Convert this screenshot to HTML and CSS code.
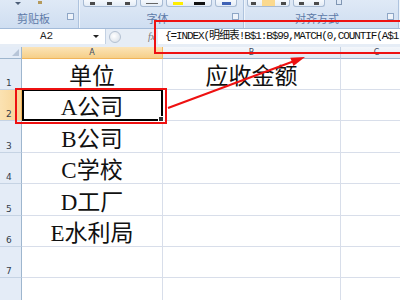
FILE: index.html
```html
<!DOCTYPE html>
<html lang="zh-CN">
<head>
  <meta charset="UTF-8" />
  <title>应收金额</title>
  <link rel="stylesheet" href="styles.css">
</head>
<body>
  <div class="app">
    <div class="ribbon">
      <div class="group g1">
        <div class="tools">
          <span class="drop"></span>
          <span class="brush"></span>
        </div>
        <div class="glabel"><span>剪贴板</span><i class="launch"></i></div>
      </div>
      <div class="group g2">
        <div class="tools">
          <span class="btn w54"><b></b><b></b><b></b></span>
          <span class="btn w23"><b class="line"></b></span>
          <span class="btn w46"><b class="yellow"></b><b class="black"></b></span>
          <span class="btn w22"><b class="blue"></b></span>
        </div>
        <div class="glabel"><span>字体</span><i class="launch"></i></div>
      </div>
      <div class="group g3">
        <div class="tools">
          <span class="btn w43"><b></b><b class="on"></b><b></b></span>
          <span class="btn w32"><b></b><b></b></span>
          <span class="wrap"><b></b></span>
        </div>
        <div class="glabel"><span>对齐方式</span><i class="launch"></i></div>
      </div>
    </div>

    <div class="fbar">
      <div class="namebox"><span class="ref">A2</span><span class="arrow"></span></div>
      <div class="ctrl"><span class="knob"></span></div>
      <div class="fx">fx</div>
      <div class="input">{=INDEX(明细表!B$1:B$99,MATCH(0,COUNTIF(A$1</div>
    </div>

    <div class="sheet">
      <div class="corner"><span></span></div>
      <div class="ch sel">A</div>
      <div class="ch">B</div>
      <div class="ch">C</div>

      <div class="rh">1</div>
      <div class="c">单位</div>
      <div class="c">应收金额</div>
      <div class="c"></div>

      <div class="rh sel">2</div>
      <div class="c active">A公司</div>
      <div class="c"></div>
      <div class="c"></div>

      <div class="rh">3</div>
      <div class="c">B公司</div>
      <div class="c"></div>
      <div class="c"></div>

      <div class="rh">4</div>
      <div class="c">C学校</div>
      <div class="c"></div>
      <div class="c"></div>

      <div class="rh">5</div>
      <div class="c">D工厂</div>
      <div class="c"></div>
      <div class="c"></div>

      <div class="rh">6</div>
      <div class="c">E水利局</div>
      <div class="c"></div>
      <div class="c"></div>

      <div class="rh">7</div>
      <div class="c"></div>
      <div class="c"></div>
      <div class="c"></div>

      <div class="rh"></div>
      <div class="c"></div>
      <div class="c"></div>
      <div class="c"></div>
    </div>

    <!-- annotations drawn over the screenshot -->
    <svg class="marks" width="400" height="300" viewBox="0 0 400 300">
      <rect x="155" y="21" width="260" height="32" fill="none" stroke="#ee1111" stroke-width="2"/>
      <rect x="16" y="89" width="150" height="34" fill="none" stroke="#ee1111" stroke-width="2"/>
      <line x1="168" y1="108" x2="293" y2="61.5" stroke="#ee1111" stroke-width="2"/>
      <polygon points="305,57 293.5,66.1 290.3,57.7" fill="#ee1111"/>
    </svg>
  </div>
</body>
</html>
```

FILE: styles.css
```css
* {
  box-sizing: border-box;
}

body {
  margin: 0;
  background: #fff;
  font-family: "Noto Sans CJK SC", sans-serif;
  color: #111;
}

.app {
  position: relative;
  width: 400px;
  height: 300px;
  overflow: hidden;
}

/* ribbon */
.ribbon {
  display: flex;
  height: 29px;
  background: linear-gradient(#dfe9f6, #cfdef1);
  border-bottom: 1px solid #a3bbd9;
}

.group {
  display: flex;
  flex-direction: column;
  border-right: 1px solid #aec3de;
  box-shadow: 1px 0 0 #eef4fb;
}

.g1 { width: 79px; }
.g2 { width: 165px; padding-left: 4px; }
.g3 { width: 155px; padding-left: 3px; }

.tools {
  display: flex;
  align-items: flex-start;
  gap: 3px;
  height: 10px;
}

.drop {
  margin: 2px 0 0 15px;
  border-left: 3px solid transparent;
  border-right: 3px solid transparent;
  border-top: 3px solid #4d5f78;
}

.brush {
  width: 4px;
  height: 3px;
  margin-left: 14px;
  margin-top: 1px;
  background: #b59a5c;
}

.btn {
  display: flex;
  align-items: center;
  justify-content: space-around;
  height: 7px;
  border: 1px solid #a7bad3;
  border-top: 0;
  border-radius: 0 0 3px 3px;
  background: linear-gradient(#f6f9fd, #e4ecf6);
}

.btn b {
  width: 5px;
  height: 3px;
  background: #4b4b4b;
}

.btn b.line { width: 12px; height: 1px; background: #666; }
.btn b.yellow { width: 10px; background: #ffee00; }
.btn b.black { width: 11px; background: #111; }
.btn b.blue { width: 9px; height: 3px; background: #3f62b5; }
.btn b.on { width: 13px; height: 6px; background: #fbd98e; }

.w54 { width: 54px; }
.w23 { width: 23px; }
.w46 { width: 46px; }
.w22 { width: 22px; }
.w43 { width: 43px; }
.w32 { width: 32px; }

.wrap {
  margin-left: 8px;
  width: 6px;
  height: 5px;
  border: 1px solid #8096b3;
  border-top: 0;
}

.glabel {
  flex: 1;
  display: flex;
  align-items: center;
  padding-bottom: 2px;
}

.glabel span {
  flex: 1;
  text-align: center;
  font-size: 11px;
  line-height: 12px;
  color: #5d7aa8;
}

.launch {
  width: 7px;
  height: 7px;
  margin: 0 4px 4px 0;
  border: 1px solid #8ea6c6;
  background: #eef3fa;
}

/* formula bar */
.fbar {
  display: flex;
  height: 18px;
  padding-bottom: 3px;
  background: #e6edf6;
}

.namebox {
  display: flex;
  align-items: center;
  width: 106px;
  background: #fff;
  border-right: 1px solid #c3d1e3;
}

.namebox .ref {
  flex: 1;
  text-align: center;
  font: 11px/15px "Liberation Mono", monospace;
  color: #222;
}

.namebox .arrow {
  width: 0;
  margin-right: 6px;
  border-left: 3px solid transparent;
  border-right: 3px solid transparent;
  border-top: 3px solid #222;
}

.ctrl {
  display: flex;
  align-items: center;
  width: 42px;
  padding-left: 3px;
}

.knob {
  width: 12px;
  height: 12px;
  border-radius: 50%;
  border: 1px solid #b4c1d2;
  background: radial-gradient(circle at 40% 40%, #fff, #d3dbe5);
}

.fx {
  width: 10px;
  font: italic 10px/15px "Liberation Serif", serif;
  color: #777;
}

.input {
  flex: 1;
  padding-left: 7px;
  background: #fff;
  font: 11px/15px "Liberation Mono", "Noto Sans CJK SC", monospace;
  letter-spacing: -1.1px;
  white-space: nowrap;
  overflow: hidden;
  color: #111;
}

/* worksheet */
.sheet {
  display: grid;
  grid-template-columns: 22px 141px 178px 72px;
  grid-template-rows: 12px 31px 31px 32px 31px 32px 31px 31px 31px;
}

.corner {
  display: flex;
  align-items: flex-end;
  justify-content: flex-end;
  padding: 0 2px 2px 0;
  background: #e4ecf7;
  border-right: 1px solid #9eb6ce;
  border-bottom: 1px solid #9eb6ce;
}

.corner span {
  border-left: 7px solid transparent;
  border-bottom: 7px solid #b7c5d8;
}

.ch {
  text-align: center;
  font: 8px/11px "DejaVu Sans", sans-serif;
  color: #3b4a60;
  background: linear-gradient(#f4f7fb, #e1e8f2);
  border-right: 1px solid #c2d0e2;
  border-bottom: 1px solid #9eb6ce;
}

.ch.sel {
  background: linear-gradient(#fbe4b8, #f6cf88);
  border-right-color: #f1b960;
  border-bottom-color: #f0b45a;
}

.rh {
  display: flex;
  align-items: flex-end;
  padding: 0 0 1px 6px;
  font: 9px/10px "DejaVu Sans", sans-serif;
  color: #333c4a;
  background: #e4ecf7;
  border-right: 1px solid #9eb6ce;
  border-bottom: 1px solid #c5d3e4;
}

.rh.sel {
  background: linear-gradient(90deg, #fbe2b2, #f8d494);
  border-right-color: #f0b45a;
}

.c {
  display: flex;
  align-items: flex-end;
  justify-content: center;
  padding-bottom: 1px;
  font: 23px/23px "Liberation Serif", "Noto Sans CJK SC", serif;
  white-space: nowrap;
  border-right: 1px solid #d8deea;
  border-bottom: 1px solid #d8deea;
}

.c.active {
  position: relative;
}

.c.active::after {
  content: "";
  position: absolute;
  top: -1px;
  left: 0;
  right: -1px;
  bottom: -1px;
  border: 2px solid #000;
}

.c.active::before {
  content: "";
  position: absolute;
  right: -2px;
  bottom: -2px;
  width: 4px;
  height: 4px;
  background: #333;
  border: 1px solid #fff;
  z-index: 1;
}

.marks {
  position: absolute;
  top: 0;
  left: 0;
  pointer-events: none;
}
```
